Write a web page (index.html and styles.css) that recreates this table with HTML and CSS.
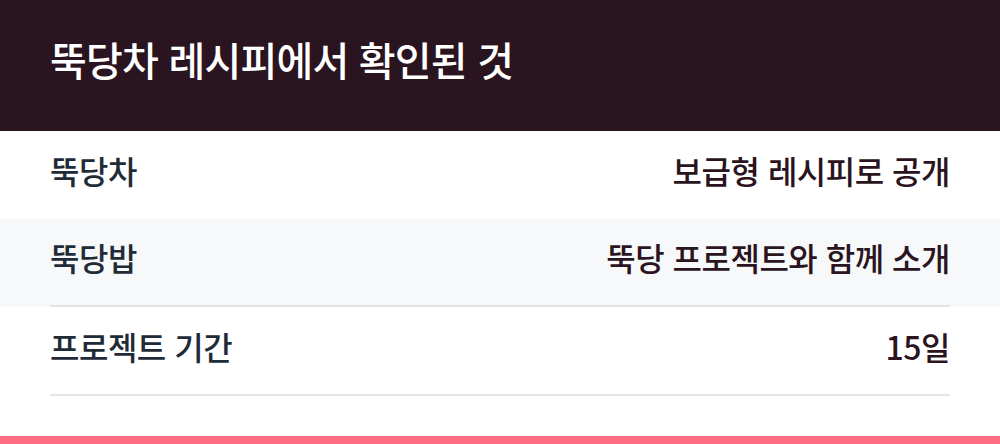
FILE: index.html
```html
<!DOCTYPE html>
<html lang="ko">
<head>
<meta charset="utf-8">
<link rel="stylesheet" href="styles.css">
</head>
<body>
<header class="head">
  <h1 class="title">뚝당차 레시피에서 확인된 것</h1>
</header>
<section class="table">
  <div class="row">
    <div class="row-inner">
      <span class="label">뚝당차</span>
      <span class="value">보급형 레시피로 공개</span>
    </div>
  </div>
  <div class="row row-alt">
    <div class="row-inner row-line">
      <span class="label">뚝당밥</span>
      <span class="value">뚝당 프로젝트와 함께 소개</span>
    </div>
  </div>
  <div class="row">
    <div class="row-inner row-line">
      <span class="label">프로젝트 기간</span>
      <span class="value">15일</span>
    </div>
  </div>
</section>
<div class="spacer"></div>
<div class="accent"></div>
</body>
</html>
```
FILE: styles.css
```css
* { box-sizing: border-box; }
html, body { margin: 0; padding: 0; }
body {
  width: 1000px;
  height: 444px;
  overflow: hidden;
  background: #ffffff;
  font-family: "Noto Sans CJK KR", "Noto Sans", sans-serif;
  display: flex;
  flex-direction: column;
}
.head {
  background: #2a1420;
  height: 131px;
  padding: 0 50px 14px;
  display: flex;
  align-items: center;
}
.title {
  margin: 0;
  color: #ffffff;
  font-size: 40px;
  font-weight: 500;
  letter-spacing: -0.8px;
  line-height: 1;
}
.table { display: flex; flex-direction: column; }
.row { padding: 0 50px; background: #ffffff; }
.row-alt { background: #f6f8fa; }
.row-inner {
  height: 87px;
  padding-bottom: 10px;
  display: flex;
  align-items: center;
  justify-content: space-between;
  font-size: 32px;
  font-weight: 500;
  letter-spacing: -0.5px;
  line-height: 1;
}
.row-line { height: 89px; border-bottom: 2px solid #e1e6ea; }
.label { color: #1f2c38; }
.value { color: #2a1420; }
.spacer { flex: 1; }
.accent { height: 8px; background: #ff6b81; }
```
